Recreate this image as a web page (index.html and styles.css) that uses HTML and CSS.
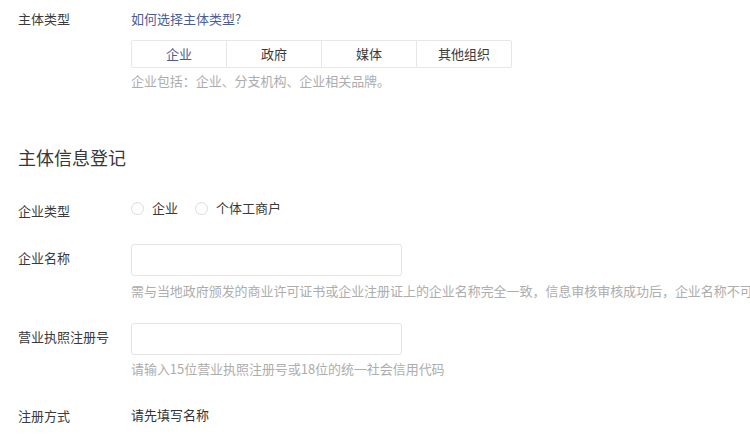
FILE: index.html
```html
<!DOCTYPE html>
<html lang="zh-CN">
<head>
    <meta charset="UTF-8">
    <meta name="viewport" content="width=device-width, initial-scale=1.0">
    <title>主体信息登记</title>
    <link rel="stylesheet" href="styles.css">
</head>
<body>
    <div class="row">
        <div class="label">主体类型</div>
        <div class="field">
            <a class="link" href="#">如何选择主体类型?</a>
            <div class="tabs">
                <div class="tab active">企业</div>
                <div class="tab">政府</div>
                <div class="tab">媒体</div>
                <div class="tab">其他组织</div>
            </div>
            <div class="hint hint-tabs">企业包括：企业、分支机构、企业相关品牌。</div>
        </div>
    </div>

    <h2 class="title">主体信息登记</h2>

    <div class="row row-type">
        <div class="label">企业类型</div>
        <div class="field radios">
            <label class="radio"><span class="dot"></span>企业</label>
            <label class="radio"><span class="dot"></span>个体工商户</label>
        </div>
    </div>

    <div class="row row-input">
        <div class="label">企业名称</div>
        <div class="field">
            <div class="input"></div>
            <div class="hint">需与当地政府颁发的商业许可证书或企业注册证上的企业名称完全一致，信息审核审核成功后，企业名称不可修改</div>
        </div>
    </div>

    <div class="row row-input row-license">
        <div class="label">营业执照注册号</div>
        <div class="field">
            <div class="input"></div>
            <div class="hint hint-license">请输入15位营业执照注册号或18位的统一社会信用代码</div>
        </div>
    </div>

    <div class="row row-method">
        <div class="label">注册方式</div>
        <div class="field value">请先填写名称</div>
    </div>
</body>
</html>
```

FILE: styles.css
```css
body {
    margin: 0;
    padding: 9px 18px 0;
    font-family: "Noto Sans CJK SC", "Noto Sans", sans-serif;
    font-size: 13px;
    line-height: 20px;
    color: #3a3a3a;
    background-color: #fff;
    overflow: hidden;
    white-space: nowrap;
}
.row {
    display: flex;
}
.label {
    width: 113px;
    flex: none;
}
.field {
    flex: 1;
    min-width: 0;
}
.link {
    color: #4b5c96;
    text-decoration: none;
}
.tabs {
    display: flex;
    box-sizing: border-box;
    width: 381px;
    margin-top: 11px;
    border: 1px solid #e7e7e7;
    border-radius: 2px;
}
.tab {
    flex: 1;
    height: 26px;
    line-height: 26px;
    text-align: center;
    border-left: 1px solid #e7e7e7;
}
.tab:first-child {
    border-left: none;
}
.tab.active {
    color: #4b5c96;
}
.hint {
    color: #adadad;
    margin-top: 5px;
    letter-spacing: -0.05px;
}
.hint-tabs {
    margin-top: 3px;
}
.title {
    margin: 53px 0 0;
    font-size: 18px;
    font-weight: normal;
    line-height: 26px;
    color: #383838;
}
.row-type {
    margin-top: 31px;
}
.radios {
    display: flex;
    gap: 17px;
    position: relative;
    top: -3px;
}
.radio {
    display: flex;
    align-items: center;
}
.dot {
    width: 11px;
    height: 11px;
    border: 1px solid #dcdcdc;
    border-radius: 50%;
    margin-right: 8px;
}
.row-input {
    margin-top: 23px;
}
.row-input .label {
    padding-top: 4px;
}
.row-license {
    margin-top: 22px;
}
.input {
    width: 269px;
    height: 30px;
    border: 1px solid #e4e4e4;
    border-radius: 3px;
}
.hint-license {
    margin-top: 4px;
}
.row-method {
    margin-top: 27px;
}
.value {
    color: #333;
    position: relative;
    top: -1px;
}
```
